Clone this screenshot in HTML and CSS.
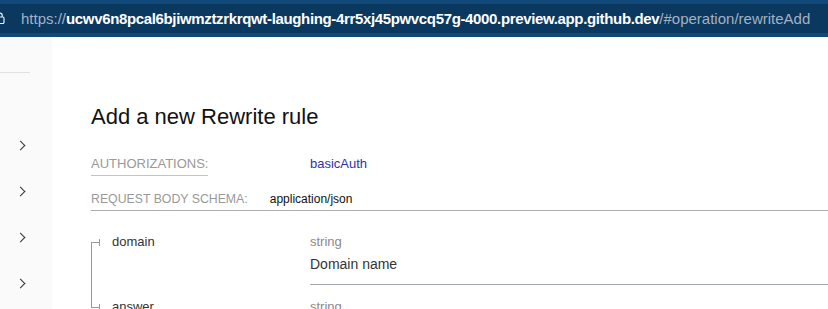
FILE: index.html
```html
<!DOCTYPE html>
<html lang="en">
<head>
  <meta charset="UTF-8">
  <title>Add a new Rewrite rule</title>
  <link rel="stylesheet" href="styles.css">
</head>
<body>

  <div class="urlbar">
    <div class="urlfield">
      <svg class="lock" width="10" height="12" viewBox="0 0 10 12">
        <rect x="1" y="5" width="8" height="6.5" rx="1.2" fill="none" stroke="#e6edf3" stroke-width="1.2"/>
        <path d="M2.8 5V3.4a2.2 2.2 0 0 1 4.4 0V5" fill="none" stroke="#e6edf3" stroke-width="1.2"/>
      </svg>
      <span class="dim">https://</span><span class="host">ucwv6n8pcal6bjiwmztzrkrqwt-laughing-4rr5xj45pwvcq57g-4000.preview.app.github.dev</span><span class="dim">/#operation/rewriteAdd</span>
    </div>
  </div>

  <div class="page">
    <div class="sidebar">
      <div class="side-rule"></div>
      <div class="menu-item"><span class="chev"></span></div>
      <div class="menu-item"><span class="chev"></span></div>
      <div class="menu-item"><span class="chev"></span></div>
      <div class="menu-item"><span class="chev"></span></div>
    </div>

    <div class="content">
      <h2>Add a new Rewrite rule</h2>

      <div class="auth">
        <h5 class="section-title">Authorizations:</h5>
        <span class="auth-name">basicAuth</span>
      </div>

      <div class="body-schema">
        <h5>Request Body schema:</h5>
        <span class="mime">application/json</span>
      </div>

      <div class="props">
        <div class="prop first">
          <div class="prop-name"><span class="tick"></span>domain</div>
          <div class="prop-detail">
            <div class="type">string</div>
            <div class="desc">Domain name</div>
          </div>
        </div>
        <div class="prop last">
          <div class="prop-name"><span class="tick"></span>answer</div>
          <div class="prop-detail">
            <div class="type">string</div>
          </div>
        </div>
      </div>
    </div>
  </div>

</body>
</html>
```

FILE: styles.css
```css
* {
  box-sizing: border-box;
}

body {
  margin: 0;
  font-family: "Liberation Sans", Arial, sans-serif;
  color: #333;
  background: #fff;
  height: 309px;
  overflow: hidden;
}

/* address bar */
.urlbar {
  height: 37px;
  background: #12497b;
  padding: 4px 0;
}

.urlfield {
  position: relative;
  height: 29px;
  background: #0b385f;
  padding-left: 21px;
  font-size: 15px;
  line-height: 29px;
  white-space: nowrap;
  overflow: hidden;
}

.lock {
  position: absolute;
  left: -5px;
  top: 8px;
}

.urlfield .dim {
  color: #a3b2c2;
}

.urlfield .host {
  color: #fff;
  font-weight: bold;
  letter-spacing: -0.35px;
}

/* layout */
.page {
  display: flex;
  height: 272px;
}

.sidebar {
  width: 52px;
  background: #fafafa;
  padding-top: 35px;
}

.side-rule {
  width: 30px;
  border-top: 1px solid #e1e1e1;
  margin-bottom: 49px;
}

.menu-item {
  height: 46px;
  display: flex;
  align-items: center;
  padding-left: 17px;
}

.chev {
  width: 7px;
  height: 7px;
  border-right: 1.5px solid #333;
  border-top: 1.5px solid #333;
  transform: rotate(45deg);
}

.content {
  flex: 1;
  padding-left: 39px;
  padding-top: 66px;
}

h2 {
  margin: 0 0 25px;
  font-size: 22px;
  font-weight: normal;
  color: #111;
  line-height: 28px;
}

/* authorizations */
.auth {
  display: flex;
  align-items: flex-start;
}

h5 {
  margin: 0;
  font-size: 13px;
  font-weight: normal;
  text-transform: uppercase;
  color: #999;
  line-height: 16px;
}

.section-title {
  width: 219px;
}

.section-title::after {
  content: "";
  display: block;
  width: 117px;
  margin-top: 3px;
  border-bottom: 1px solid #c4c4c4;
}

.auth-name {
  font-size: 13px;
  line-height: 16px;
  color: #32329f;
}

.body-schema {
  margin-top: 15px;
  display: flex;
  align-items: baseline;
  border-bottom: 1px solid #a9adb0;
  padding-bottom: 3px;
}

.body-schema h5 {
  font-size: 12.3px;
  margin-right: 22px;
}

.mime {
  font-size: 12px;
  color: #111;
}

/* property tree */
.props {
  margin-top: 23px;
}

.prop {
  display: flex;
  position: relative;
}

.prop-name {
  width: 219px;
  font-size: 13px;
  color: #333;
  line-height: 16px;
  padding-left: 21px;
  position: relative;
}

.prop.first .prop-name::before {
  content: "";
  position: absolute;
  left: 0;
  top: 8px;
  bottom: 0;
  border-left: 1px solid #999;
}

.prop.last .prop-name::before {
  content: "";
  position: absolute;
  left: 0;
  top: 0;
  height: 9px;
  border-left: 1px solid #999;
}

.tick {
  position: absolute;
  left: 0;
  top: 8px;
  width: 9px;
  border-top: 1px solid #999;
}

.tick::after {
  content: "";
  position: absolute;
  right: 0;
  top: -4px;
  height: 7px;
  border-left: 1px solid #999;
}

.prop-detail {
  flex: 1;
}

.prop.first .prop-detail {
  border-bottom: 1px solid #a3a8ac;
  padding-bottom: 11px;
  margin-bottom: 14px;
}

.type {
  font-size: 13px;
  color: #8a8a8a;
  line-height: 16px;
}

.desc {
  font-size: 14px;
  color: #333;
  margin-top: 5px;
  line-height: 18px;
}
```
